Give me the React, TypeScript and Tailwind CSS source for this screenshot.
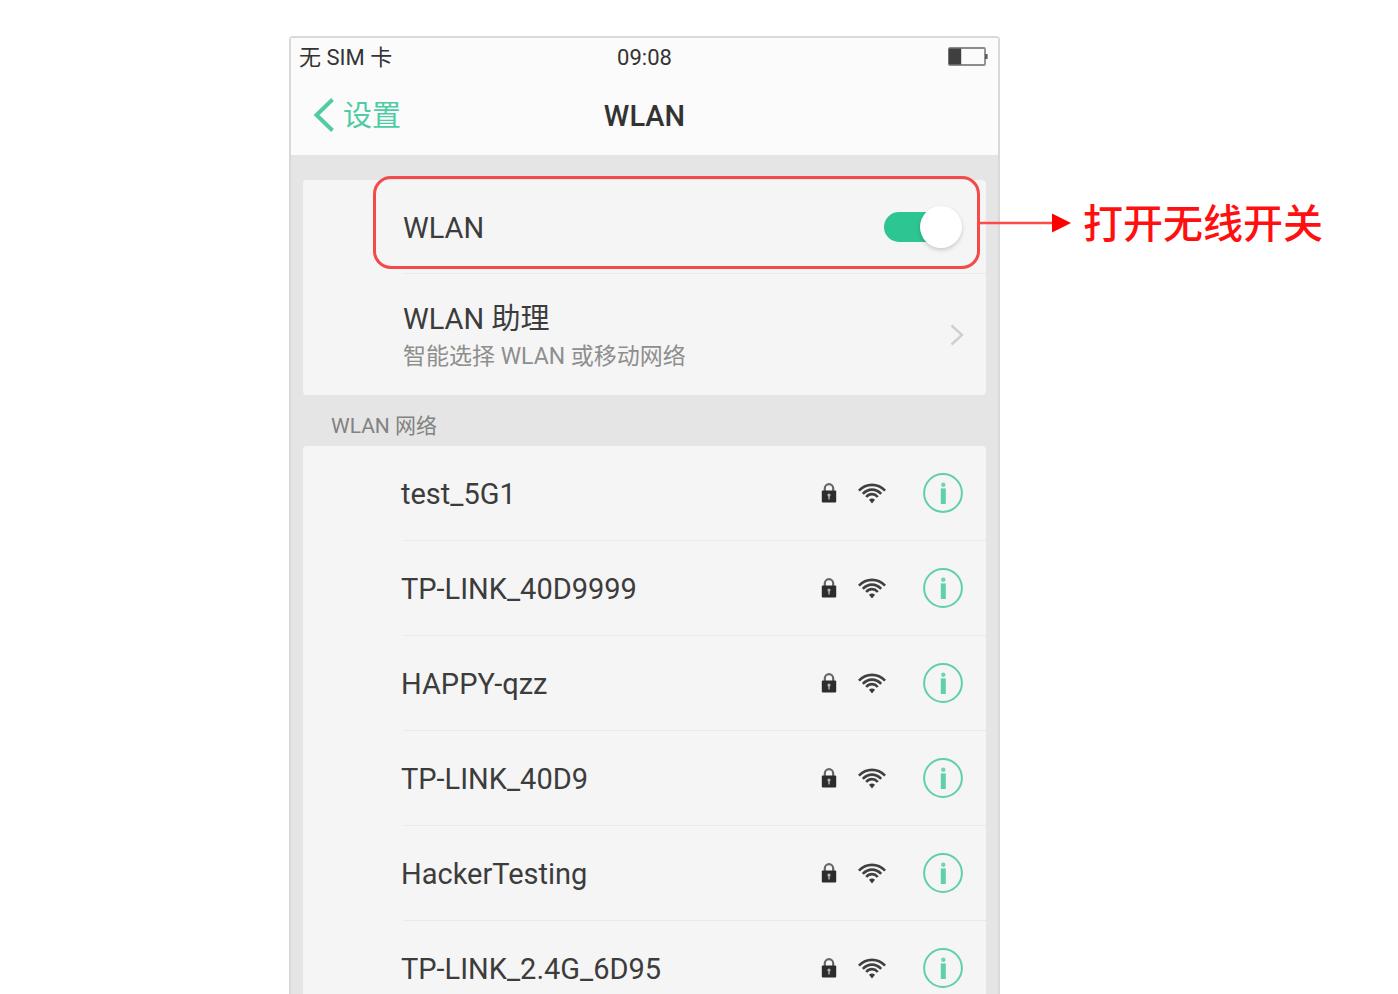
import React, { useState } from "react";

const networks = [
  "test_5G1",
  "TP-LINK_40D9999",
  "HAPPY-qzz",
  "TP-LINK_40D9",
  "HackerTesting",
  "TP-LINK_2.4G_6D95",
];

function BatteryIcon() {
  return (
    <svg width="40" height="20" viewBox="0 0 40 20" fill="none" aria-hidden="true">
      <rect x="1" y="1" width="36" height="17" rx="1" stroke="#8c8c8c" strokeWidth="1.8" />
      <rect x="0.6" y="1.5" width="12.6" height="16" fill="#3f3f3f" />
      <rect x="37" y="7" width="2.6" height="5" fill="#5a5a5a" />
    </svg>
  );
}

function LockIcon() {
  return (
    <svg width="16" height="20" viewBox="0 0 16 20" fill="none" aria-hidden="true">
      <path d="M3.8 9V5.4a4.2 4.2 0 0 1 8.4 0V9" stroke="#666" strokeWidth="2.2" />
      <rect x="0.8" y="7.6" width="14.4" height="12" rx="1" fill="#2c2c2c" />
      <circle cx="8" cy="12" r="1.6" fill="#b5b5b5" />
      <path d="M8 12v4.4" stroke="#b5b5b5" strokeWidth="1.4" />
    </svg>
  );
}

function WifiIcon() {
  return (
    <svg width="28" height="21" viewBox="0 0 28 21" fill="none" aria-hidden="true">
      <g stroke="#404040" strokeWidth="2.6">
        <path d="M0.9 7.6C8.4 0 19.6 0 27.1 7.6" />
        <path d="M4.8 10.8C10.2 5.2 17.8 5.2 23.2 10.8" />
        <path d="M8.2 14C11.6 10.2 16.4 10.2 19.8 14" />
      </g>
      <path d="M11 16.8C12.8 15 15.2 15 17 16.8L14 20.6Z" fill="#3a3a3a" />
    </svg>
  );
}

function InfoIcon() {
  return (
    <svg width="40" height="40" viewBox="0 0 40 40" fill="none" aria-hidden="true">
      <circle cx="20" cy="20" r="18.9" stroke="#5fd0a8" strokeWidth="2" />
      <circle cx="20.3" cy="11.8" r="2.2" fill="#6fd5b0" />
      <rect x="17.8" y="15.4" width="5" height="15.6" fill="#5fd0a8" />
    </svg>
  );
}

function Callout() {
  return (
    <div className="pointer-events-none absolute -top-1 right-1.5 bottom-1 left-[70px] rounded-[18px] border-3 border-[#f54a4a]">
      <div className="absolute inset-y-0 left-full flex items-center gap-3 whitespace-nowrap">
        <svg width="94" height="20" viewBox="0 0 94 20" aria-hidden="true">
          <path d="M2 10H76" stroke="#ff4a4a" strokeWidth="2.6" />
          <path d="M75 0.5L94 10L75 19.5Z" fill="#ff0000" />
        </svg>
        <span className="pt-1 text-[40px] leading-none font-medium text-[#ff1010]">打开无线开关</span>
      </div>
    </div>
  );
}

export default function App() {
  const [enabled, setEnabled] = useState(true);

  return (
    <div className="grid h-screen grid-cols-[289fr_711fr_398fr] overflow-hidden bg-white pt-9 font-[Roboto,'Noto_Sans_CJK_SC',sans-serif] text-[#3c3c3c]">
      <main className="col-start-2 flex min-w-0 flex-col rounded-t-sm border-2 border-b-0 border-[#d9d9d9] bg-[#e5e5e5]">
        <header className="bg-[#fbfbfb]">
          <div className="grid h-9 grid-cols-3 items-center px-2 text-[22px] leading-9 text-[#333]">
            <span className="pt-0.5">无 SIM 卡</span>
            <span className="pt-0.5 text-center">09:08</span>
            <span className="justify-self-end pr-0.5">
              <BatteryIcon />
            </span>
          </div>
          <div className="grid h-[81px] grid-cols-3 items-center px-[22px]">
            <a href="#settings" className="flex items-center gap-2 text-[29px] text-[#4fcca3]">
              <svg width="22" height="34" viewBox="0 0 22 34" fill="none" aria-hidden="true">
                <path d="M19.5 1.5L3.5 17L19.5 32.5" stroke="#4fcca3" strokeWidth="4" />
              </svg>
              <span className="pt-1">设置</span>
            </a>
            <h1 className="pt-1 text-center text-[29px] font-medium text-[#333]">WLAN</h1>
          </div>
        </header>

        <div className="px-3">
          <section className="mt-[25px] rounded bg-[#f5f5f5]">
            <div className="relative flex h-[93px] items-center justify-between pr-6 pl-[100px]">
              <label htmlFor="wlan" className="pt-1 text-[29px]">
                WLAN
              </label>
              <input
                id="wlan"
                type="checkbox"
                role="switch"
                checked={enabled}
                onChange={(e) => setEnabled(e.target.checked)}
                className="relative h-[42px] w-[78px] appearance-none before:absolute before:inset-y-1.5 before:right-2 before:left-0 before:rounded-full before:bg-[#c8c8c8] after:absolute after:top-0 after:left-0 after:size-[42px] after:rounded-full after:bg-white after:shadow-[0_2px_4px_rgba(0,0,0,0.18)] checked:before:bg-[#2dc592] checked:after:right-0 checked:after:left-auto"
              />
              <Callout />
            </div>
            <div className="ml-[100px] border-t border-[#e9e9e9]" />
            <a href="#assistant" className="flex h-[121px] items-center justify-between pr-5 pl-[100px]">
              <span className="pt-1">
                <span className="block text-[29px] leading-10">WLAN 助理</span>
                <span className="block text-[23px] leading-9 text-[#8e8e8e]">智能选择 WLAN 或移动网络</span>
              </span>
              <svg width="18" height="24" viewBox="0 0 18 24" fill="none" aria-hidden="true">
                <path d="M3.5 2.5L14 12L3.5 21.5" stroke="#cfcfcf" strokeWidth="2.4" />
              </svg>
            </a>
          </section>

          <h2 className="pt-[15px] pb-1 pl-7 text-[21px] leading-8 text-[#828282]">WLAN 网络</h2>

          <ul className="rounded-t bg-[#f5f5f5]">
            {networks.map((name) => (
              <li key={name} className="ml-[100px] flex h-[95px] items-center border-b border-[#e9e9e9] pr-[23px]">
                <span className="-ml-0.5 flex-1 pt-1 text-[29px]">{name}</span>
                <LockIcon />
                <span className="mr-[37px] ml-[21px]">
                  <WifiIcon />
                </span>
                <button type="button" aria-label={`${name} info`}>
                  <InfoIcon />
                </button>
              </li>
            ))}
          </ul>
        </div>
      </main>
    </div>
  );
}
